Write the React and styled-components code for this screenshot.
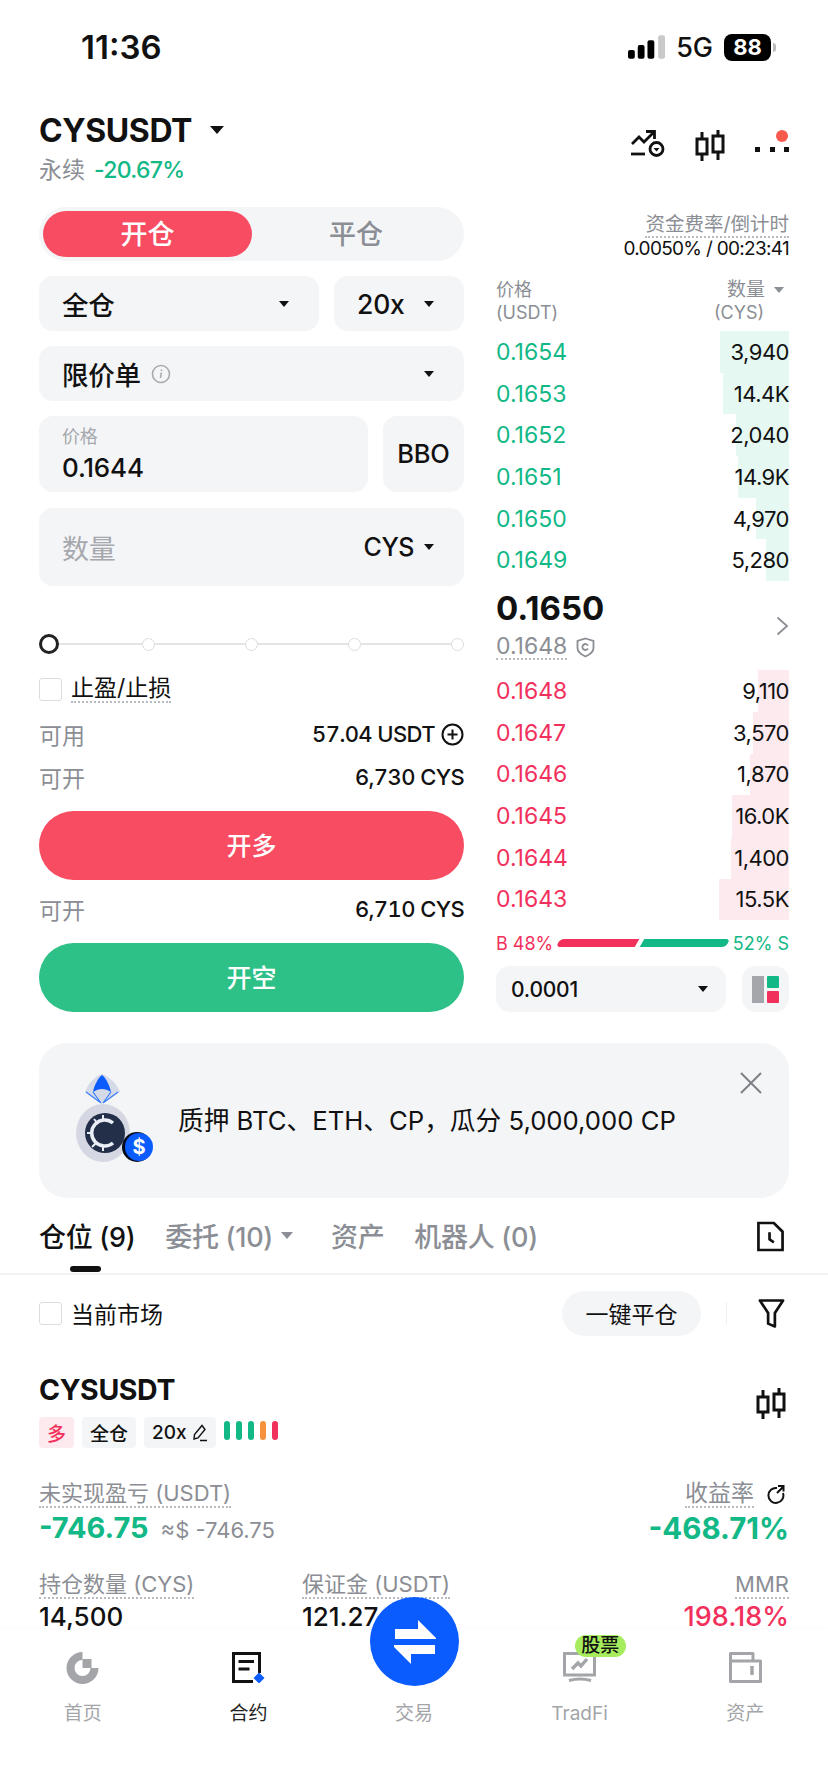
import styled, { createGlobalStyle } from "styled-components";

const GlobalStyle = createGlobalStyle`
  html, body { margin: 0; padding: 0; background: #fff; }
  body { font-family: Inter, "Noto Sans CJK SC", sans-serif; color: #111; }
  * { box-sizing: border-box; }
`;

const GREEN = "#12b886";
const RED = "#f2305c";
const GREY = "#8b8e94";
const FIELD = "#f4f5f7";

const Page = styled.div`
  position: relative;
  width: 828px;
  height: 1792px;
  overflow: hidden;
  background: #fff;
`;

/* status bar */
const StatusBar = styled.div`
  height: 94px;
  padding: 0 52px 0 81px;
  display: flex;
  align-items: center;
  justify-content: space-between;
`;
const Clock = styled.div`
  font-size: 33px;
  font-weight: 600;
`;
const StatusRight = styled.div`
  display: flex;
  align-items: center;
  gap: 11px;
`;
const Network = styled.span`
  font-size: 27px;
  font-weight: 500;
`;
const Battery = styled.div`
  width: 47px;
  height: 27px;
  border-radius: 8px;
  background: #000;
  color: #fff;
  font-size: 22px;
  font-weight: 700;
  display: flex;
  align-items: center;
  justify-content: center;
  margin-right: 5px;
  position: relative;
  &::after {
    content: "";
    position: absolute;
    right: -5px;
    top: 9px;
    width: 3px;
    height: 9px;
    border-radius: 0 3px 3px 0;
    background: #bbb;
  }
`;

/* market header */
const Header = styled.div`
  height: 113px;
  padding: 18px 39px 0;
  display: flex;
  justify-content: space-between;
`;
const TitleRow = styled.div`
  display: flex;
  align-items: center;
  gap: 18px;
  height: 36px;
`;
const Title = styled.div`
  font-size: ${(p) => p.$size || 32}px;
  font-weight: 700;
  letter-spacing: -0.4px;
`;
const Sub = styled.div`
  margin-top: 7px;
  font-size: 23px;
  line-height: 30px;
  color: ${GREY};
  display: flex;
  gap: 9px;
  span { color: ${GREEN}; font-weight: 500; letter-spacing: -0.7px; }
`;
const HeaderIcons = styled.div`
  display: flex;
  align-items: flex-start;
  gap: 30px;
  padding-top: 18px;
`;
const Caret = styled.i`
  display: block;
  flex: none;
  width: 0;
  height: 0;
  border-left: ${(p) => p.$s || 5.5}px solid transparent;
  border-right: ${(p) => p.$s || 5.5}px solid transparent;
  border-top: ${(p) => (p.$s || 5.5) + 1}px solid ${(p) => p.$c || "#111"};
`;

/* trading area */
const Trade = styled.div`
  padding: 0 39px;
  display: grid;
  grid-template-columns: 425px 293px;
  justify-content: space-between;
`;
const Form = styled.div`
  display: flex;
  flex-direction: column;
`;
const Pill = styled.div`
  height: 54px;
  border-radius: 27px;
  background: ${FIELD};
  padding: 4px;
  display: grid;
  grid-template-columns: 209px 1fr;
  margin-bottom: 15px;
`;
const PillTab = styled.div`
  border-radius: 23px;
  padding-bottom: 4px;
  display: flex;
  align-items: center;
  justify-content: center;
  font-size: 27px;
  background: ${(p) => (p.$on ? "#f84c62" : "transparent")};
  color: ${(p) => (p.$on ? "#fff" : GREY)};
  font-weight: 500;
`;
const FieldRow = styled.div`
  display: grid;
  grid-template-columns: ${(p) => p.$cols || "1fr"};
  gap: 15px;
  margin-bottom: ${(p) => p.$mb ?? 15}px;
`;
const Field = styled.div`
  height: ${(p) => p.$h || 55}px;
  border-radius: 14px;
  background: ${FIELD};
  padding: 0 30px 0 23px;
  display: flex;
  align-items: center;
  justify-content: space-between;
  font-size: 26.5px;
  font-weight: 500;
  letter-spacing: -0.2px;
`;
const FieldLeft = styled.div`
  display: flex;
  align-items: center;
  gap: 10px;
`;
const FieldRight = styled.div`
  display: flex;
  align-items: center;
  gap: 10px;
  font-size: 25px;
  letter-spacing: -0.5px;
`;
const PriceField = styled(Field)`
  flex-direction: column;
  align-items: flex-start;
  justify-content: center;
`;
const SmallLabel = styled.div`
  font-size: 18px;
  font-weight: 400;
  line-height: 24px;
  color: #a5a8ad;
`;
const PriceValue = styled.div`
  font-size: 26px;
  line-height: 31px;
  font-weight: 500;
  margin-top: 3px;
`;
const Bbo = styled(Field)`
  padding: 0 0 1px;
  justify-content: center;
  font-size: 25.5px;
`;
const Placeholder = styled.span`
  font-size: 27px;
  font-weight: 400;
  color: #a5a8ad;
`;
const Slider = styled.div`
  height: 20px;
  margin-top: 48px;
  display: flex;
  align-items: center;
  gap: 90px;
  position: relative;
  &::before {
    content: "";
    position: absolute;
    left: 0;
    right: 0;
    top: 9px;
    height: 2px;
    background: #e3e4e7;
  }
`;
const Knob = styled.i`
  position: relative;
  display: block;
  flex: none;
  border-radius: 50%;
  background: #fff;
  width: ${(p) => (p.$on ? 20 : 13)}px;
  height: ${(p) => (p.$on ? 20 : 13)}px;
  margin-right: ${(p) => (p.$on ? -7 : 0)}px;
  border: ${(p) => (p.$on ? "3.5px solid #222" : "1.5px solid #dcdde0")};
`;
const CheckRow = styled.div`
  display: flex;
  align-items: center;
  gap: 9px;
  margin-top: ${(p) => p.$mt || 0}px;
  font-size: 23px;
`;
const Box = styled.i`
  display: block;
  width: 23px;
  height: 23px;
  border: 1.5px solid #dcdde0;
  border-radius: 3px;
`;
const Dotted = styled.span`
  border-bottom: 2px dotted ${(p) => p.$c || "#b9bbc0"};
  line-height: ${(p) => p.$lh || 26}px;
`;
const InfoRow = styled.div`
  height: 28px;
  margin-top: ${(p) => p.$mt}px;
  display: flex;
  align-items: center;
  justify-content: space-between;
  font-size: 23px;
  color: ${GREY};
`;
const InfoValue = styled.div`
  display: flex;
  align-items: center;
  gap: 6px;
  color: #111;
  font-weight: 500;
  font-size: 22px;
  letter-spacing: -0.6px;
  font-variant-numeric: tabular-nums;
`;
const ActionButton = styled.div`
  height: 69px;
  margin-top: 20px;
  padding-bottom: 4px;
  border-radius: 35px;
  background: ${(p) => p.$bg};
  color: #fff;
  font-size: 25px;
  font-weight: 500;
  display: flex;
  align-items: center;
  justify-content: center;
`;

/* order book */
const Book = styled.div`
  display: flex;
  flex-direction: column;
`;
const Funding = styled.div`
  height: 54px;
  display: flex;
  flex-direction: column;
  align-items: flex-end;
  font-size: 19px;
  color: #111;
  margin-bottom: 17px;
  span:last-child {
    line-height: 22px;
    letter-spacing: -0.7px;
  }
`;
const FundingLabel = styled(Dotted)`
  color: ${GREY};
  line-height: 24px;
  font-size: 19.5px;
  margin-top: 5px;
`;
const BookHead = styled.div`
  height: 53px;
  display: flex;
  justify-content: space-between;
  font-size: 18px;
  line-height: 23px;
  color: ${GREY};
`;
const HeadRight = styled.div`
  display: flex;
  flex-direction: column;
  align-items: flex-end;
`;
const HeadTop = styled.div`
  display: flex;
  align-items: center;
  gap: 9px;
  margin-right: 5px;
  font-size: 19px;
`;
const HeadUnit = styled.div`
  margin-right: 25px;
`;
const BookRow = styled.div`
  position: relative;
  height: 41.7px;
  display: flex;
  align-items: center;
  justify-content: space-between;
  font-size: 23px;
  color: ${(p) => p.$c};
`;
const DepthBar = styled.i`
  position: absolute;
  right: 0;
  top: 0;
  bottom: 0;
  background: ${(p) => p.$bg};
`;
const Qty = styled.span`
  position: relative;
  color: #111;
  font-size: 22px;
  letter-spacing: -0.5px;
`;
const Mid = styled.div`
  height: 89px;
  display: flex;
  align-items: center;
  justify-content: space-between;
`;
const MidInfo = styled.div`
  padding-bottom: 5px;
`;
const MidPrice = styled.div`
  font-size: 33px;
  font-weight: 700;
  line-height: 44px;
`;
const MarkRow = styled.div`
  display: flex;
  align-items: center;
  gap: 9px;
  font-size: 23px;
  color: ${GREY};
  margin-top: 4px;
`;
const Ratio = styled.div`
  margin-top: 10px;
  height: 26px;
  display: flex;
  align-items: center;
  gap: 5px;
  font-size: 18px;
`;
const RatioLabel = styled.span`
  color: ${(p) => p.$c};
`;
const RatioBar = styled.i`
  display: block;
  height: 8px;
  flex: ${(p) => p.$flex};
  background: ${(p) => p.$c};
  border-radius: ${(p) => p.$r};
  transform: skewX(-30deg);
`;
const BookFoot = styled.div`
  margin-top: 10px;
  display: grid;
  grid-template-columns: 230px 47px;
  justify-content: space-between;
`;
const StepField = styled(Field)`
  height: 46px;
  padding: 0 18px 0 15px;
  font-size: 21px;
`;
const LayoutButton = styled(Field)`
  height: 46px;
  padding: 0;
  justify-content: center;
`;

/* banner */
const Banner = styled.div`
  position: relative;
  margin: 31px 39px 0;
  height: 155px;
  border-radius: 28px;
  background: ${FIELD};
  padding: 0 0 4px 33px;
  display: flex;
  align-items: center;
  gap: 22px;
  font-size: 25.7px;
`;
const BannerClose = styled.div`
  position: absolute;
  right: 27px;
  top: 29px;
  line-height: 0;
`;

/* position tabs */
const Tabs = styled.div`
  height: 77px;
  padding: 20px 39px 0;
  border-bottom: 2px solid #f1f2f4;
  display: flex;
  align-items: flex-start;
  gap: 30px;
`;
const TabItem = styled.div`
  position: relative;
  display: flex;
  align-items: center;
  gap: 8px;
  height: 34px;
  font-size: 27px;
  font-weight: 500;
  letter-spacing: -0.3px;
  margin-right: ${(p) => p.$mr || 0}px;
  color: ${(p) => (p.$on ? "#111" : GREY)};
  ${(p) =>
    p.$on &&
    `&::after {
      content: "";
      position: absolute;
      left: 31px;
      top: 48px;
      width: 31px;
      height: 6px;
      border-radius: 3px;
      background: #111;
    }`}
`;
const TabEnd = styled.div`
  margin-left: auto;
  margin-right: 5px;
  margin-top: 3px;
  line-height: 0;
`;
const MarketRow = styled.div`
  height: 72px;
  padding: 4px 43px 0 39px;
  display: flex;
  align-items: center;
  font-size: 23px;
`;
const MarketLabel = styled(CheckRow)`
  flex: 1;
`;
const CloseAll = styled.div`
  height: 45px;
  width: 139px;
  border-radius: 23px;
  background: ${FIELD};
  display: flex;
  align-items: center;
  justify-content: center;
  font-size: 23px;
`;
const Sep = styled.i`
  display: block;
  width: 1px;
  height: 22px;
  margin: 0 31px 0 25px;
  background: #eeeff1;
`;

/* position card */
const Card = styled.div`
  padding: 25px 39px 0;
`;
const CardTop = styled.div`
  display: flex;
  justify-content: space-between;
`;
const CardAction = styled.div`
  margin: 16px 3px 0 0;
  line-height: 0;
`;
const Tags = styled.div`
  display: flex;
  align-items: center;
  gap: 8px;
  margin-top: 10px;
`;
const Tag = styled.div`
  height: 31px;
  padding: 0 8px;
  border-radius: 4px;
  background: ${(p) => p.$bg || FIELD};
  color: ${(p) => p.$c || "#111"};
  font-size: 19px;
  font-weight: 500;
  display: flex;
  align-items: center;
  gap: 5px;
`;
const Meter = styled.div`
  display: flex;
  gap: 6px;
  margin-bottom: 4px;
`;
const MeterBar = styled.i`
  display: block;
  width: 6px;
  height: 19px;
  border-radius: 3px;
  background: ${(p) => p.$c};
`;
const Stats = styled.div`
  display: flex;
  margin-top: ${(p) => p.$mt}px;
`;
const Stat = styled.div`
  display: flex;
  flex-direction: column;
  align-items: ${(p) => (p.$right ? "flex-end" : "flex-start")};
  flex: ${(p) => (p.$right ? 1 : "none")};
  width: ${(p) => p.$w || "auto"};
`;
const StatLabel = styled.div`
  display: flex;
  align-items: center;
  gap: 12px;
  font-size: 22px;
  color: ${GREY};
`;
const RateLabel = styled(Dotted)`
  font-size: 23px;
`;
const RefreshWrap = styled.span`
  margin-right: 4px;
  line-height: 0;
`;
const StatValue = styled.div`
  display: flex;
  align-items: baseline;
  gap: 12px;
  margin-top: ${(p) => p.$mt ?? 3}px;
  font-size: ${(p) => p.$size || 26}px;
  line-height: 34px;
  font-weight: ${(p) => p.$weight || 500};
  color: ${(p) => p.$c || "#111"};
  small {
    font-size: 22px;
    font-weight: 400;
    color: ${GREY};
  }
`;

/* bottom bar */
const BottomBar = styled.div`
  position: absolute;
  left: 0;
  right: 0;
  bottom: 0;
  height: 162px;
  background: #fff;
  display: grid;
  grid-template-columns: repeat(5, 1fr);
  box-shadow: 0 -2px 6px rgba(0, 0, 0, 0.02);
`;
const NavItem = styled.div`
  position: relative;
  display: flex;
  flex-direction: column;
  align-items: center;
  padding-top: 22px;
  font-size: 19px;
  line-height: 24px;
  color: ${(p) => (p.$on ? "#222" : "#a3a5a9")};
`;
const NavIcon = styled.div`
  height: 32px;
  margin-bottom: 18px;
  line-height: 0;
`;
const SwapButton = styled.div`
  position: absolute;
  top: -33px;
  left: 39px;
  width: 89px;
  height: 89px;
  border-radius: 50%;
  background: #0b5cff;
  display: flex;
  align-items: center;
  justify-content: center;
`;
const Badge = styled.div`
  position: absolute;
  left: 78px;
  top: 5px;
  width: 51px;
  height: 22px;
  border-radius: 11px;
  background: #a6ec5c;
  color: #111;
  font-size: 19px;
  font-weight: 500;
  display: flex;
  align-items: center;
  justify-content: center;
`;

const Candles = ({ h = 31 }) => (
  <svg width={(h * 30) / 31} height={h} viewBox="0 0 30 31" fill="none" stroke="#111" strokeWidth="3">
    <path d="M7 2v7M7 24v7M23 0v6M23 22v8" />
    <rect x="2" y="9" width="10" height="15" />
    <rect x="18" y="6" width="10" height="16" />
  </svg>
);

const TriggerIcon = () => (
  <svg width="34" height="28" viewBox="0 0 34 28" fill="none" stroke="#111" strokeWidth="2.8">
    <path d="M1 14l7-7 5 5L23 2M15 1.500h8.500V9" />
    <path d="M0 24h14" />
    <circle cx="25.500" cy="19" r="6.500" />
    <path d="M22.500 18h6l-3 3.500z" fill="#111" stroke="none" />
  </svg>
);

const MoreIcon = () => (
  <svg width="34" height="31" viewBox="0 -3 34 31" fill="#111">
    <rect x="0" y="14" width="5" height="5" />
    <rect x="15" y="14" width="5" height="5" />
    <rect x="29" y="14" width="5" height="5" />
    <circle cx="27" cy="3" r="6" fill="#f85a4e" />
  </svg>
);

const Signal = () => (
  <svg width="37" height="24" viewBox="0 0 38 24">
    <rect x="0" y="15" width="7" height="9" rx="2" fill="#000" />
    <rect x="10" y="10" width="7" height="14" rx="2" fill="#000" />
    <rect x="20" y="5" width="7" height="19" rx="2" fill="#000" />
    <rect x="31" y="0" width="7" height="24" rx="2" fill="#c9c9c9" />
  </svg>
);

const Info = () => (
  <svg width="20" height="20" viewBox="0 0 20 20" fill="none" stroke="#a9abb0" strokeWidth="1.600">
    <circle cx="10" cy="10" r="8.500" />
    <path d="M10.300 8.500L9.500 14M10.500 5.500v1.500" />
  </svg>
);

const PlusCircle = () => (
  <svg width="23" height="23" viewBox="0 0 23 23" fill="none" stroke="#111" strokeWidth="2">
    <circle cx="11.500" cy="11.500" r="10" />
    <path d="M6.500 11.500h10M11.500 6.500v10" />
  </svg>
);

const Shield = () => (
  <svg width="19" height="21" viewBox="0 0 19 21" fill="none" stroke="#8b8e94" strokeWidth="1.800">
    <path d="M9.500 1.500l8 2.500v7c0 4-3.500 6.500-8 8.500-4.500-2-8-4.500-8-8.500V4z" />
    <path d="M12 11.500a3 3 0 1 1 0-3" />
  </svg>
);

const Chevron = () => (
  <svg width="13" height="20" viewBox="0 0 13 20" fill="none" stroke="#8b8e94" strokeWidth="1.800">
    <path d="M1.500 1.500L11 10l-9.500 8.500" />
  </svg>
);

const LayoutIcon = () => (
  <svg width="27" height="27" viewBox="0 0 27 27">
    <rect x="0" y="0" width="12" height="27" fill="#a4a6ab" />
    <rect x="15" y="0" width="12" height="12" rx="1" fill="#12b886" />
    <rect x="15" y="15" width="12" height="12" rx="1" fill="#f2305c" />
  </svg>
);

const CoinLogo = () => (
  <svg width="84" height="92" viewBox="22 14 84 92">
    <path d="M52 15c-7 2-14 10-17 18l17 12 18-12c-3-8-11-16-18-18z" fill="#d5dae8" />
    <path d="M52 16c-4 3-8 11-9 17 3-2 6-3 9-3s6 1 9 3c-1-6-5-14-9-17z" fill="#0b5cff" />
    <path d="M36 33l15 11M68 33L53 44M43 33l8 11M61 33l-8 11" stroke="#3b7dff" strokeWidth="1.200" fill="none" />
    <ellipse cx="53" cy="74" rx="27" ry="29" fill="#d5d8e2" />
    <circle cx="55" cy="74" r="20" fill="#232f49" />
    <path d="M63 64a13 13 0 1 0 0 20" stroke="#e9edf5" strokeWidth="3.500" fill="none" />
    <path d="M44 60l4 5M42 88l5-5M53 56v5M53 92v-5M37 74h5" stroke="#e9edf5" strokeWidth="2" />
    <circle cx="87" cy="88" r="15" fill="#050b1c" />
    <circle cx="89" cy="88" r="14" fill="#0b5cff" />
    <text x="89" y="95" textAnchor="middle" fontSize="20" fontWeight="700" fill="#fff" fontFamily="Inter, sans-serif">$</text>
  </svg>
);

const CloseIcon = () => (
  <svg width="22" height="22" viewBox="0 0 22 22" fill="none" stroke="#7d8086" strokeWidth="2">
    <path d="M1 1l20 20M21 1L1 21" />
  </svg>
);

const HistoryIcon = () => (
  <svg width="27" height="31" viewBox="0 0 28 31" fill="none" stroke="#111" strokeWidth="2.800">
    <path d="M1.500 1.500h16l9 9v19h-25z" />
    <path d="M13 11v7.500l4.500 3" />
  </svg>
);

const Funnel = () => (
  <svg width="27" height="31" viewBox="0 0 28 31" fill="none" stroke="#111" strokeWidth="2.800">
    <path d="M2 2h24L17.500 15v14l-7-3V15z" strokeLinejoin="round" />
  </svg>
);

const Pen = () => (
  <svg width="16" height="18" viewBox="0 0 16 18" fill="none" stroke="#111" strokeWidth="1.400">
    <path d="M10 1.500l3 4L6 14l-4 1 .5-4.500zM8 16.500h7" />
  </svg>
);

const Refresh = () => (
  <svg width="19" height="19" viewBox="0 0 19 19" fill="none" stroke="#111" strokeWidth="2">
    <path d="M11 3a7.500 7.500 0 1 0 6 5" />
    <path d="M12 1h5.500v5.500M17 2l-6 6" />
  </svg>
);

const HomeIcon = () => (
  <svg width="33" height="32" viewBox="0 0 33 32" fill="#a3a5a9">
    <path d="M16.500 0A16 16 0 1 0 32.500 16H24.500A8 8 0 1 1 16.500 8z" />
    <rect x="16.500" y="7" width="9" height="9" />
  </svg>
);

const ContractIcon = () => (
  <svg width="33" height="31" viewBox="0 0 33 31" fill="none">
    <path d="M21 29.500H1.500V1.500H27.500V21" stroke="#111" strokeWidth="3" />
    <path d="M6.500 9.500h15.500M6.500 17h11" stroke="#111" strokeWidth="3" />
    <path d="M27 20.500l5.500 5.500-5.500 5.500-5.500-5.500z" fill="#0b5cff" />
  </svg>
);

const SwapIcon = () => (
  <svg width="42" height="44" viewBox="0 0 42 44" fill="#fff">
    <path d="M1 9H24V0L42 18v1H1z" />
    <path d="M41 25v9H17v10L0 27v-2z" />
  </svg>
);

const TradFiIcon = () => (
  <svg width="33" height="30" viewBox="0 0 33 30" fill="none" stroke="#a3a5a9">
    <path d="M1.500 1.500H31.500V23H1.500z" strokeWidth="3" />
    <path d="M6 28.500q11-3 22 0" strokeWidth="3" />
    <path d="M9 17l6-6 3 3 6-7" strokeWidth="3.400" />
  </svg>
);

const AssetIcon = () => (
  <svg width="33" height="31" viewBox="0 0 33 31" fill="none" stroke="#a3a5a9" strokeWidth="3">
    <path d="M1.500 9H31.500V29.500H1.500zM1.500 9V1.500H24V9" strokeLinejoin="round" />
    <path d="M23 14v9" strokeWidth="3.500" />
  </svg>
);

const ASKS = [
  ["0.1654", "3,940", 69],
  ["0.1653", "14.4K", 66],
  ["0.1652", "2,040", 53],
  ["0.1651", "14.9K", 51],
  ["0.1650", "4,970", 33],
  ["0.1649", "5,280", 23],
];

const BIDS = [
  ["0.1648", "9,110", 31],
  ["0.1647", "3,570", 36],
  ["0.1646", "1,870", 39],
  ["0.1645", "16.0K", 57],
  ["0.1644", "1,400", 58],
  ["0.1643", "15.5K", 70],
];

const Rows = ({ rows, color, bg }) =>
  rows.map(([price, qty, depth]) => (
    <BookRow key={price} $c={color}>
      <DepthBar $bg={bg} style={{ width: depth }} />
      <span>{price}</span>
      <Qty>{qty}</Qty>
    </BookRow>
  ));

const App = () => {
  return (
    <Page>
      <GlobalStyle />
      <StatusBar>
        <Clock>11:36</Clock>
        <StatusRight>
          <Signal />
          <Network>5G</Network>
          <Battery>88</Battery>
        </StatusRight>
      </StatusBar>

      <Header>
        <div>
          <TitleRow>
            <Title>CYSUSDT</Title>
            <Caret $s={7} />
          </TitleRow>
          <Sub>
            永续 <span>-20.67%</span>
          </Sub>
        </div>
        <HeaderIcons>
          <TriggerIcon />
          <Candles />
          <MoreIcon />
        </HeaderIcons>
      </Header>

      <Trade>
        <Form>
          <Pill>
            <PillTab $on>开仓</PillTab>
            <PillTab>平仓</PillTab>
          </Pill>
          <FieldRow $cols="280px 130px">
            <Field>
              全仓
              <Caret />
            </Field>
            <Field>
              20x
              <Caret />
            </Field>
          </FieldRow>
          <FieldRow>
            <Field>
              <FieldLeft>
                限价单 <Info />
              </FieldLeft>
              <Caret />
            </Field>
          </FieldRow>
          <FieldRow $cols="329px 81px" $mb={16}>
            <PriceField $h={76}>
              <SmallLabel>价格</SmallLabel>
              <PriceValue>0.1644</PriceValue>
            </PriceField>
            <Bbo $h={76}>BBO</Bbo>
          </FieldRow>
          <FieldRow $mb={0}>
            <Field $h={78}>
              <Placeholder>数量</Placeholder>
              <FieldRight>
                CYS
                <Caret />
              </FieldRight>
            </Field>
          </FieldRow>
          <Slider>
            <Knob $on />
            <Knob />
            <Knob />
            <Knob />
            <Knob />
          </Slider>
          <CheckRow $mt={21}>
            <Box />
            <Dotted>止盈/止损</Dotted>
          </CheckRow>
          <InfoRow $mt={17}>
            可用
            <InfoValue>
              57.04 USDT <PlusCircle />
            </InfoValue>
          </InfoRow>
          <InfoRow $mt={15}>
            可开
            <InfoValue>6,730 CYS</InfoValue>
          </InfoRow>
          <ActionButton $bg="#f84c62">开多</ActionButton>
          <InfoRow $mt={15}>
            可开
            <InfoValue>6,710 CYS</InfoValue>
          </InfoRow>
          <ActionButton $bg="#2dc187">开空</ActionButton>
        </Form>

        <Book>
          <Funding>
            <FundingLabel>资金费率/倒计时</FundingLabel>
            <span>0.0050% / 00:23:41</span>
          </Funding>
          <BookHead>
            <div>
              价格
              <br />
              (USDT)
            </div>
            <HeadRight>
              <HeadTop>
                数量 <Caret $s={5} $c="#8b8e94" />
              </HeadTop>
              <HeadUnit>(CYS)</HeadUnit>
            </HeadRight>
          </BookHead>
          <Rows rows={ASKS} color={GREEN} bg="#e6f8f2" />
          <Mid>
            <MidInfo>
              <MidPrice>0.1650</MidPrice>
              <MarkRow>
                <Dotted $lh={24}>0.1648</Dotted> <Shield />
              </MarkRow>
            </MidInfo>
            <Chevron />
          </Mid>
          <Rows rows={BIDS} color={RED} bg="#fdeaee" />
          <Ratio>
            <RatioLabel $c={RED}>B 48%</RatioLabel>
            <RatioBar $flex="48" $c={RED} $r="4px 0 0 4px" />
            <RatioBar $flex="52" $c={GREEN} $r="0 4px 4px 0" />
            <RatioLabel $c={GREEN}>52% S</RatioLabel>
          </Ratio>
          <BookFoot>
            <StepField>
              0.0001
              <Caret />
            </StepField>
            <LayoutButton>
              <LayoutIcon />
            </LayoutButton>
          </BookFoot>
        </Book>
      </Trade>

      <Banner>
        <CoinLogo />
        质押 BTC、ETH、CP，瓜分 5,000,000 CP
        <BannerClose>
          <CloseIcon />
        </BannerClose>
      </Banner>

      <Tabs>
        <TabItem $on>仓位 (9)</TabItem>
        <TabItem $mr={8}>
          委托 (10) <Caret $s={6.5} $c="#8b8e94" />
        </TabItem>
        <TabItem>资产</TabItem>
        <TabItem>机器人 (0)</TabItem>
        <TabEnd>
          <HistoryIcon />
        </TabEnd>
      </Tabs>

      <MarketRow>
        <MarketLabel>
          <Box />
          当前市场
        </MarketLabel>
        <CloseAll>一键平仓</CloseAll>
        <Sep />
        <Funnel />
      </MarketRow>

      <Card>
        <CardTop>
          <div>
            <Title $size={28.5}>CYSUSDT</Title>
            <Tags>
              <Tag $bg="#fdeaee" $c={RED}>
                多
              </Tag>
              <Tag>全仓</Tag>
              <Tag>
                20x <Pen />
              </Tag>
              <Meter>
                <MeterBar $c={GREEN} />
                <MeterBar $c={GREEN} />
                <MeterBar $c={GREEN} />
                <MeterBar $c="#f6923c" />
                <MeterBar $c={RED} />
              </Meter>
            </Tags>
          </div>
          <CardAction>
            <Candles />
          </CardAction>
        </CardTop>
        <Stats $mt={32}>
          <Stat>
            <StatLabel>
              <Dotted>未实现盈亏 (USDT)</Dotted>
            </StatLabel>
            <StatValue $size={29} $weight={700} $c={GREEN}>
              -746.75 <small>≈$ -746.75</small>
            </StatValue>
          </Stat>
          <Stat $right>
            <StatLabel>
              <RateLabel>收益率</RateLabel>
              <RefreshWrap>
                <Refresh />
              </RefreshWrap>
            </StatLabel>
            <StatValue $size={29.5} $weight={700} $c={GREEN}>
              -468.71%
            </StatValue>
          </Stat>
        </Stats>
        <Stats $mt={24}>
          <Stat $w="263px">
            <StatLabel>
              <Dotted>持仓数量 (CYS)</Dotted>
            </StatLabel>
            <StatValue $mt={1}>14,500</StatValue>
          </Stat>
          <Stat>
            <StatLabel>
              <Dotted>保证金 (USDT)</Dotted>
            </StatLabel>
            <StatValue $mt={1}>121.27</StatValue>
          </Stat>
          <Stat $right>
            <StatLabel>
              <Dotted>MMR</Dotted>
            </StatLabel>
            <StatValue $mt={1} $size={27} $c={RED}>
              198.18%
            </StatValue>
          </Stat>
        </Stats>
      </Card>

      <BottomBar>
        <NavItem>
          <NavIcon>
            <HomeIcon />
          </NavIcon>
          首页
        </NavItem>
        <NavItem $on>
          <NavIcon>
            <ContractIcon />
          </NavIcon>
          合约
        </NavItem>
        <NavItem>
          <NavIcon />
          <SwapButton>
            <SwapIcon />
          </SwapButton>
          交易
        </NavItem>
        <NavItem>
          <NavIcon>
            <TradFiIcon />
          </NavIcon>
          <Badge>股票</Badge>
          TradFi
        </NavItem>
        <NavItem>
          <NavIcon>
            <AssetIcon />
          </NavIcon>
          资产
        </NavItem>
      </BottomBar>
    </Page>
  );
};

export default App;
